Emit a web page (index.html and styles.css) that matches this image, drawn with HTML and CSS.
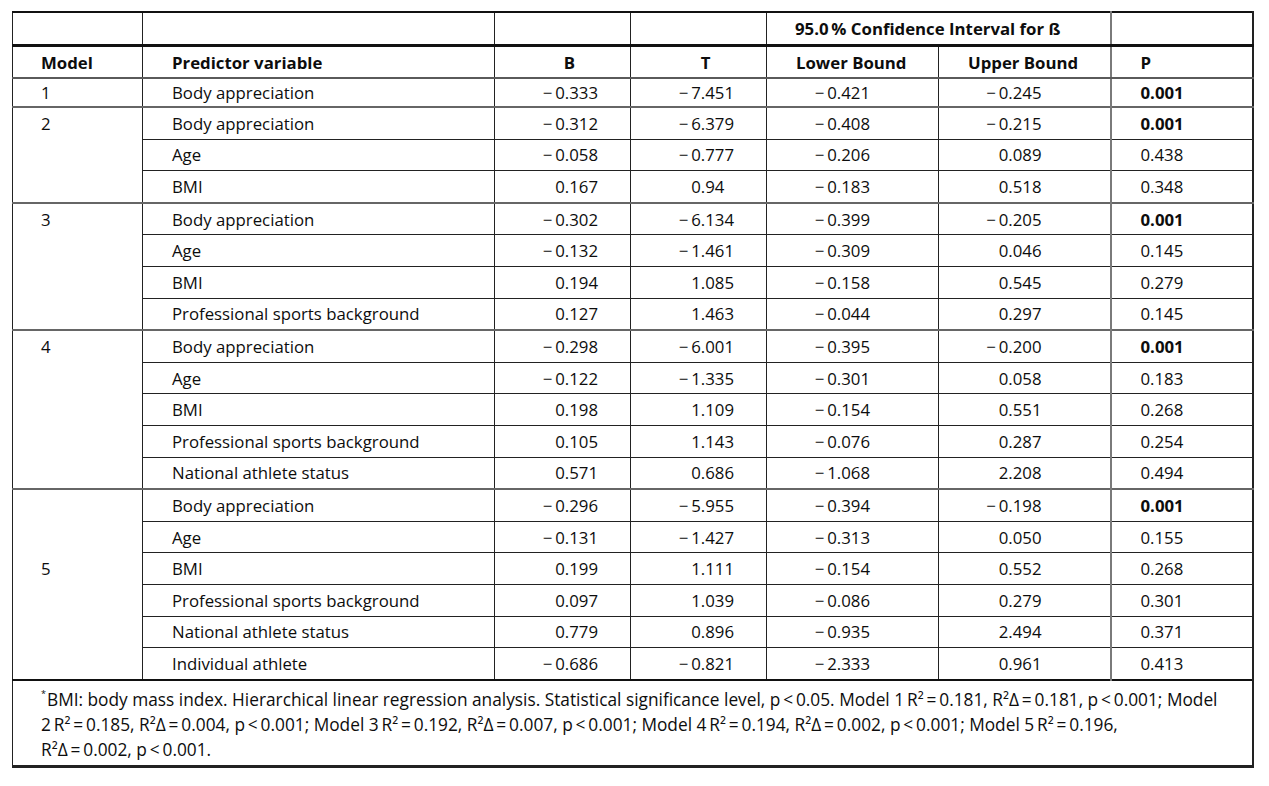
FILE: index.html
```html
<!DOCTYPE html>
<html lang="en">
<head>
<meta charset="utf-8">
<title>Regression table</title>
<link rel="stylesheet" href="styles.css">
</head>
<body>
<div class="page">
<table class="reg">
  <colgroup>
    <col class="c-model"><col class="c-pred"><col class="c-num"><col class="c-num"><col class="c-ci"><col class="c-ci"><col class="c-p">
  </colgroup>
  <thead>
    <tr class="h1">
      <th></th><th></th><th></th><th></th>
      <th colspan="2" class="ci">95.0&#8201;% Confidence Interval for ß</th>
      <th class="pcol"></th>
    </tr>
    <tr class="h2">
      <th class="model">Model</th>
      <th class="pred">Predictor variable</th>
      <th class="bt">B</th>
      <th class="bt">T</th>
      <th class="lb">Lower Bound</th>
      <th class="lb">Upper Bound</th>
      <th class="pcol pv">P</th>
    </tr>
  </thead>
  <tbody>
    <tr class="first grp">
      <td class="model">1</td><td class="pred">Body appreciation</td>
      <td class="num">&minus;&#8201;0.333</td><td class="num">&minus;&#8201;7.451</td><td class="num ci-n">&minus;&#8201;0.421</td><td class="num ci-n">&minus;&#8201;0.245</td><td class="pcol pv"><b>0.001</b></td>
    </tr>
    <tr class="grp">
      <td class="model">2</td><td class="pred">Body appreciation</td>
      <td class="num">&minus;&#8201;0.312</td><td class="num">&minus;&#8201;6.379</td><td class="num ci-n">&minus;&#8201;0.408</td><td class="num ci-n">&minus;&#8201;0.215</td><td class="pcol pv"><b>0.001</b></td>
    </tr>
    <tr>
      <td class="model cont"></td><td class="pred">Age</td>
      <td class="num">&minus;&#8201;0.058</td><td class="num">&minus;&#8201;0.777</td><td class="num ci-n">&minus;&#8201;0.206</td><td class="num ci-n">0.089</td><td class="pcol pv">0.438</td>
    </tr>
    <tr>
      <td class="model cont"></td><td class="pred">BMI</td>
      <td class="num">0.167</td><td class="num short">0.94</td><td class="num ci-n">&minus;&#8201;0.183</td><td class="num ci-n">0.518</td><td class="pcol pv">0.348</td>
    </tr>
    <tr class="grp">
      <td class="model">3</td><td class="pred">Body appreciation</td>
      <td class="num">&minus;&#8201;0.302</td><td class="num">&minus;&#8201;6.134</td><td class="num ci-n">&minus;&#8201;0.399</td><td class="num ci-n">&minus;&#8201;0.205</td><td class="pcol pv"><b>0.001</b></td>
    </tr>
    <tr>
      <td class="model cont"></td><td class="pred">Age</td>
      <td class="num">&minus;&#8201;0.132</td><td class="num">&minus;&#8201;1.461</td><td class="num ci-n">&minus;&#8201;0.309</td><td class="num ci-n">0.046</td><td class="pcol pv">0.145</td>
    </tr>
    <tr>
      <td class="model cont"></td><td class="pred">BMI</td>
      <td class="num">0.194</td><td class="num">1.085</td><td class="num ci-n">&minus;&#8201;0.158</td><td class="num ci-n">0.545</td><td class="pcol pv">0.279</td>
    </tr>
    <tr>
      <td class="model cont"></td><td class="pred">Professional sports background</td>
      <td class="num">0.127</td><td class="num">1.463</td><td class="num ci-n">&minus;&#8201;0.044</td><td class="num ci-n">0.297</td><td class="pcol pv">0.145</td>
    </tr>
    <tr class="grp">
      <td class="model">4</td><td class="pred">Body appreciation</td>
      <td class="num">&minus;&#8201;0.298</td><td class="num">&minus;&#8201;6.001</td><td class="num ci-n">&minus;&#8201;0.395</td><td class="num ci-n">&minus;&#8201;0.200</td><td class="pcol pv"><b>0.001</b></td>
    </tr>
    <tr>
      <td class="model cont"></td><td class="pred">Age</td>
      <td class="num">&minus;&#8201;0.122</td><td class="num">&minus;&#8201;1.335</td><td class="num ci-n">&minus;&#8201;0.301</td><td class="num ci-n">0.058</td><td class="pcol pv">0.183</td>
    </tr>
    <tr>
      <td class="model cont"></td><td class="pred">BMI</td>
      <td class="num">0.198</td><td class="num">1.109</td><td class="num ci-n">&minus;&#8201;0.154</td><td class="num ci-n">0.551</td><td class="pcol pv">0.268</td>
    </tr>
    <tr>
      <td class="model cont"></td><td class="pred">Professional sports background</td>
      <td class="num">0.105</td><td class="num">1.143</td><td class="num ci-n">&minus;&#8201;0.076</td><td class="num ci-n">0.287</td><td class="pcol pv">0.254</td>
    </tr>
    <tr>
      <td class="model cont"></td><td class="pred">National athlete status</td>
      <td class="num">0.571</td><td class="num">0.686</td><td class="num ci-n">&minus;&#8201;1.068</td><td class="num ci-n">2.208</td><td class="pcol pv">0.494</td>
    </tr>
    <tr class="grp">
      <td class="model"></td><td class="pred">Body appreciation</td>
      <td class="num">&minus;&#8201;0.296</td><td class="num">&minus;&#8201;5.955</td><td class="num ci-n">&minus;&#8201;0.394</td><td class="num ci-n">&minus;&#8201;0.198</td><td class="pcol pv"><b>0.001</b></td>
    </tr>
    <tr>
      <td class="model cont"></td><td class="pred">Age</td>
      <td class="num">&minus;&#8201;0.131</td><td class="num">&minus;&#8201;1.427</td><td class="num ci-n">&minus;&#8201;0.313</td><td class="num ci-n">0.050</td><td class="pcol pv">0.155</td>
    </tr>
    <tr>
      <td class="model cont">5</td><td class="pred">BMI</td>
      <td class="num">0.199</td><td class="num">1.111</td><td class="num ci-n">&minus;&#8201;0.154</td><td class="num ci-n">0.552</td><td class="pcol pv">0.268</td>
    </tr>
    <tr>
      <td class="model cont"></td><td class="pred">Professional sports background</td>
      <td class="num">0.097</td><td class="num">1.039</td><td class="num ci-n">&minus;&#8201;0.086</td><td class="num ci-n">0.279</td><td class="pcol pv">0.301</td>
    </tr>
    <tr>
      <td class="model cont"></td><td class="pred">National athlete status</td>
      <td class="num">0.779</td><td class="num">0.896</td><td class="num ci-n">&minus;&#8201;0.935</td><td class="num ci-n">2.494</td><td class="pcol pv">0.371</td>
    </tr>
    <tr>
      <td class="model cont"></td><td class="pred">Individual athlete</td>
      <td class="num">&minus;&#8201;0.686</td><td class="num">&minus;&#8201;0.821</td><td class="num ci-n">&minus;&#8201;2.333</td><td class="num ci-n">0.961</td><td class="pcol pv">0.413</td>
    </tr>
  </tbody>
  <tfoot>
    <tr>
      <td colspan="7" class="note"><sup>*</sup>BMI: body mass index. Hierarchical linear regression analysis. Statistical significance level, p&#8201;&lt;&#8201;0.05. Model 1&#8201;R²&#8201;=&#8201;0.181, R²Δ&#8201;=&#8201;0.181, p&#8201;&lt;&#8201;0.001; Model<br>2&#8201;R²&#8201;=&#8201;0.185, R²Δ&#8201;=&#8201;0.004, p&#8201;&lt;&#8201;0.001; Model 3&#8201;R²&#8201;=&#8201;0.192, R²Δ&#8201;=&#8201;0.007, p&#8201;&lt;&#8201;0.001; Model 4&#8201;R²&#8201;=&#8201;0.194, R²Δ&#8201;=&#8201;0.002, p&#8201;&lt;&#8201;0.001; Model 5&#8201;R²&#8201;=&#8201;0.196,<br>R²Δ&#8201;=&#8201;0.002, p&#8201;&lt;&#8201;0.001.</td>
    </tr>
  </tfoot>
</table>
</div>
</body>
</html>
```

FILE: styles.css
```css
html, body {
  margin: 0;
  padding: 0;
  background: #ffffff;
}

.page {
  padding: 11px 0 0 12px;
}

.reg {
  border-collapse: collapse;
  table-layout: fixed;
  width: 1240px;
  font-family: "Open Sans", "Noto Sans", sans-serif;
  font-size: 16.8px;
  color: #0d0d0d;
  border-top: 2px solid #111;
  border-left: 1px solid #222;
  border-right: 2px solid #222;
  border-bottom: 3px solid #222;
}

.c-model { width: 130px; }
.c-pred { width: 352px; }
.c-num { width: 136px; }
.c-ci { width: 172px; }
.c-p { width: 142px; }

.reg th,
.reg td {
  padding: 0;
  border-left: 1px solid #222;
  border-right: 1px solid #222;
  white-space: nowrap;
  vertical-align: middle;
}

.reg th {
  font-weight: 700;
  text-align: left;
}

.reg .pcol {
  border-left: 2px solid #7a7a7a;
}

.h1 th {
  height: 31px;
  border-bottom: 3px solid #111;
}

.h1 .ci {
  padding-left: 28px;
}

.h2 th {
  height: 30px;
  border-bottom: 2px solid #5a5a5a;
}

.reg .model {
  padding-left: 28px;
  vertical-align: middle;
}

.reg .pred {
  padding-left: 29px;
}

.reg th.bt {
  text-align: center;
  padding-left: 14px;
}

.reg th.lb {
  padding-left: 29px;
}

.reg .pv {
  padding-left: 29px;
  text-align: left;
}

tbody td {
  height: 30.6px;
  border-top: 1px solid #222;
}

tbody tr.first td {
  height: 27px;
}

tbody tr.grp td {
  border-top: 2px solid #666;
}

tbody td.cont {
  border-top: 0;
}

.reg .num {
  text-align: right;
  padding-right: 32px;
}

.reg .num.ci-n {
  padding-right: 68px;
}

.reg .num.short {
  padding-right: calc(32px + 1ch);
}

.reg b {
  font-weight: 700;
}

tfoot td.note {
  border-top: 2px solid #111;
  border-left: 1px solid #222;
  border-right: 2px solid #222;
  padding: 6px 10px 3px 28px;
  font-size: 17.3px;
  line-height: 25px;
  white-space: normal;
  vertical-align: top;
  height: 75px;
}

.note sup {
  font-size: 9px;
  vertical-align: top;
  line-height: 12px;
  position: relative;
  top: 1px;
  margin-right: 1px;
}
```
